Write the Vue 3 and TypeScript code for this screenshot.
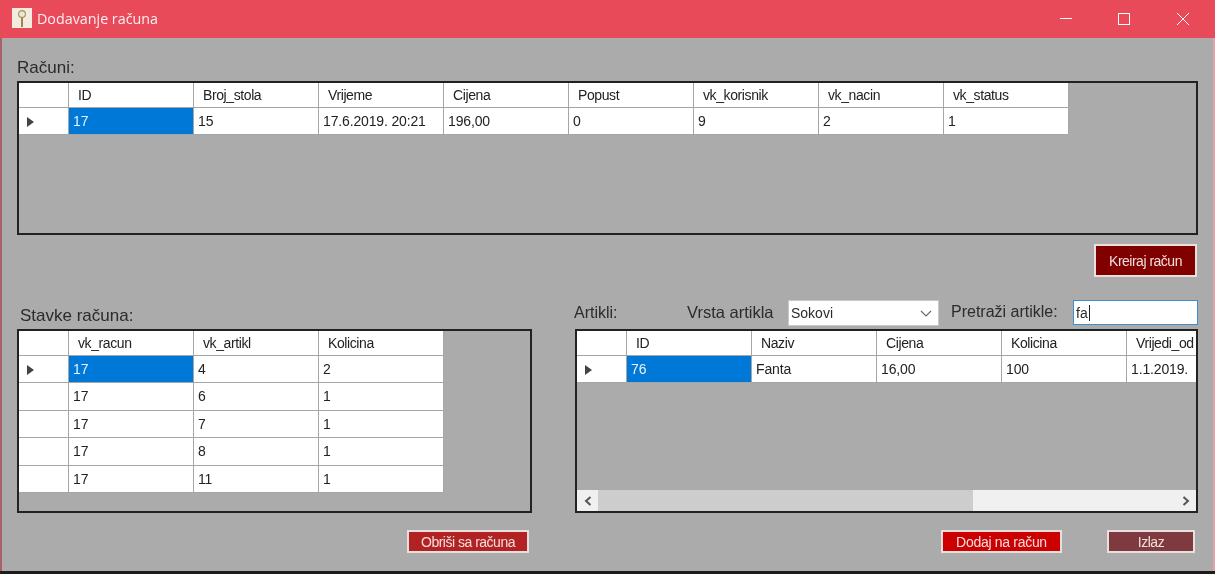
<template>
  <div class="window">
    <header class="titlebar">
      <div class="app-icon">
        <svg width="20" height="20" viewBox="0 0 20 20">
          <rect width="20" height="20" fill="#f1ecdd" />
          <path d="M10 9 L10 19" stroke="#8a6a35" stroke-width="1.6" />
          <circle cx="10" cy="6" r="3.4" fill="#efe6cf" stroke="#a58a5c" stroke-width="1.1" />
        </svg>
      </div>
      <span class="title">Dodavanje računa</span>
      <div class="window-btns">
        <svg width="12" height="12" viewBox="0 0 12 12"><path d="M0 5.5H12" stroke="#fff" stroke-width="1" /></svg>
        <svg width="12" height="12" viewBox="0 0 12 12"><rect x="0.5" y="0.5" width="11" height="11" fill="none" stroke="#fff" stroke-width="1" /></svg>
        <svg class="close" width="12" height="12" viewBox="0 0 12 12"><path d="M0 0L12 12M12 0L0 12" stroke="#fff" stroke-width="1" /></svg>
      </div>
    </header>

    <main class="content">
      <div class="top-label">Računi:</div>
      <div class="grid grid-top">
        <div class="row head">
          <div class="rowhead"></div>
          <div v-for="c in racuniCols" :key="c" class="cell">{{ c }}</div>
        </div>
        <div v-for="(r, i) in racuni" :key="i" class="row">
          <div class="rowhead"><span v-if="i === 0" class="arrow"></span></div>
          <div v-for="(v, j) in r" :key="j" class="cell" :class="{ selected: i === 0 && j === 0 }">{{ v }}</div>
        </div>
      </div>

      <div class="create-row">
        <button class="btn btn-create">Kreiraj račun</button>
      </div>

      <div class="lower">
        <section class="col">
          <div class="toolbar toolbar-left">Stavke računa:</div>
          <div class="grid grid-lower grid-stavke">
            <div class="row head">
              <div class="rowhead"></div>
              <div v-for="c in stavkeCols" :key="c" class="cell">{{ c }}</div>
            </div>
            <div v-for="(r, i) in stavke" :key="i" class="row">
              <div class="rowhead"><span v-if="i === 0" class="arrow"></span></div>
              <div v-for="(v, j) in r" :key="j" class="cell" :class="{ selected: i === 0 && j === 0 }">{{ v }}</div>
            </div>
          </div>
          <div class="actions">
            <button class="btn btn-remove">Obriši sa računa</button>
          </div>
        </section>

        <section class="col">
          <div class="toolbar">
            <span class="lbl-artikli">Artikli:</span>
            <span class="lbl-vrsta">Vrsta artikla</span>
            <div class="combo">
              <span>Sokovi</span>
              <svg width="12" height="7" viewBox="0 0 12 7"><path d="M1 1L6 6L11 1" fill="none" stroke="#666" stroke-width="1.1" /></svg>
            </div>
            <span class="lbl-search">Pretraži artikle:</span>
            <div class="search">fa<span class="caret"></span></div>
          </div>
          <div class="grid grid-lower grid-artikli">
            <div class="rows-clip">
              <div class="row head">
                <div class="rowhead"></div>
                <div v-for="c in artikliCols" :key="c" class="cell">{{ c }}</div>
              </div>
              <div v-for="(r, i) in artikli" :key="i" class="row">
                <div class="rowhead"><span v-if="i === 0" class="arrow"></span></div>
                <div v-for="(v, j) in r" :key="j" class="cell" :class="{ selected: i === 0 && j === 0 }">{{ v }}</div>
              </div>
            </div>
            <div class="scrollbar">
              <div class="sb-btn">
                <svg width="8" height="10" viewBox="0 0 8 10"><path d="M6.5 1L2 5L6.5 9" fill="none" stroke="#555" stroke-width="2" /></svg>
              </div>
              <div class="sb-track"><div class="sb-thumb"></div></div>
              <div class="sb-btn">
                <svg width="8" height="10" viewBox="0 0 8 10"><path d="M1.5 1L6 5L1.5 9" fill="none" stroke="#555" stroke-width="2" /></svg>
              </div>
            </div>
          </div>
          <div class="actions actions-right">
            <button class="btn btn-add">Dodaj na račun</button>
            <button class="btn btn-exit">Izlaz</button>
          </div>
        </section>
      </div>
    </main>
    <div class="bottom-edge"></div>
  </div>
</template>

<script setup lang="ts">
const racuniCols = ['ID', 'Broj_stola', 'Vrijeme', 'Cijena', 'Popust', 'vk_korisnik', 'vk_nacin', 'vk_status']
const racuni = [['17', '15', '17.6.2019. 20:21', '196,00', '0', '9', '2', '1']]

const stavkeCols = ['vk_racun', 'vk_artikl', 'Kolicina']
const stavke = [
  ['17', '4', '2'],
  ['17', '6', '1'],
  ['17', '7', '1'],
  ['17', '8', '1'],
  ['17', '11', '1']
]

const artikliCols = ['ID', 'Naziv', 'Cijena', 'Kolicina', 'Vrijedi_od']
const artikli = [['76', 'Fanta', '16,00', '100', '1.1.2019.']]
</script>

<style>
html, body {
  margin: 0;
  background: #1c1c1c;
}
</style>

<style scoped>
.window {
  width: 1215px;
  height: 574px;
  display: flex;
  flex-direction: column;
  overflow: hidden;
  background: #e84a5a;
  font-family: "Liberation Sans", Arial, sans-serif;
  color: #222;
  filter: blur(0.35px);
}

.titlebar {
  height: 38px;
  box-sizing: border-box;
  padding: 0 0 2px 12px;
  flex: none;
  display: flex;
  align-items: center;
  color: #fff;
}

.app-icon {
  width: 20px;
  height: 20px;
  margin-right: 5px;
}

.title {
  font-family: "Open Sans", sans-serif;
  font-size: 14.3px;
  color: #fdeef0;
}

.window-btns {
  margin-left: auto;
  display: flex;
  gap: 46px;
  padding: 2px 26px 0 0;
}

.close {
  margin-left: 1px;
}

.content {
  flex: 1;
  padding: 0 15px;
  background: #ababab;
  min-height: 0;
  border-left: 2px solid #a8636a;
  border-right: 2px solid #e8a0a8;
}

.top-label {
  height: 43px;
  line-height: 59px;
  font-size: 17px;
  color: #2b2b2b;
}

.grid {
  border: 2px solid #222;
  box-sizing: border-box;
  background: #ababab;
  overflow: hidden;
}

.grid-top {
  height: 154px;
}

.grid-lower {
  height: 184px;
}

.grid-artikli {
  display: flex;
  flex-direction: column;
}

.rows-clip {
  flex: 1;
  min-height: 0;
  overflow: hidden;
}

.row {
  display: flex;
  height: 27px;
  width: max-content;
  background: #fff;
}

.row.head {
  height: 25px;
}

.grid-stavke .row:not(.head) {
  height: 27.4px;
}

.rowhead {
  width: 50px;
  flex: none;
  box-sizing: border-box;
  border-right: 1px solid #a6a6a6;
  border-bottom: 1px solid #a6a6a6;
  display: flex;
  align-items: center;
  padding-left: 8px;
}

.arrow {
  width: 0;
  height: 0;
  margin-top: 1px;
  border-left: 7px solid #444;
  border-top: 5px solid transparent;
  border-bottom: 5px solid transparent;
}

.cell {
  width: 125px;
  flex: none;
  box-sizing: border-box;
  padding-left: 4px;
  border-right: 1px solid #a6a6a6;
  border-bottom: 1px solid #a6a6a6;
  font-size: 14px;
  letter-spacing: -0.15px;
  line-height: 26px;
  white-space: nowrap;
  overflow: hidden;
}

.head .cell {
  padding-left: 9px;
  letter-spacing: -0.4px;
  line-height: 24px;
}

.cell.selected {
  background: #0078d7;
  color: #e8f3fc;
}

.create-row {
  display: flex;
  justify-content: flex-end;
  padding: 9px 1px 0 0;
  height: 55px;
  box-sizing: border-box;
}

.btn {
  box-sizing: border-box;
  border: 2px solid #e9e0de;
  font-family: "Liberation Sans", Arial, sans-serif;
  font-size: 14px;
  letter-spacing: -0.5px;
  color: #f3dede;
  padding: 0;
  height: 23px;
  line-height: 16px;
}

.btn-create {
  width: 103px;
  height: 33px;
  background: #800000;
}

.lower {
  display: grid;
  grid-template-columns: 515px 623px;
  column-gap: 43px;
  margin-top: 10px;
}

.toolbar {
  height: 29px;
  display: flex;
  align-items: flex-start;
  font-size: 16px;
  color: #2b2b2b;
}

.toolbar-left {
  padding: 7px 0 0 3px;
  box-sizing: border-box;
  font-size: 17px;
  line-height: 18px;
}

.toolbar > span {
  line-height: 24px;
}

.toolbar > .lbl-artikli {
  margin-left: -1px;
  width: 113px;
  flex: none;
  line-height: 26px;
}

.lbl-vrsta {
  width: 101px;
  flex: none;
  font-size: 16.5px;
}

.combo {
  width: 151px;
  height: 26px;
  flex: none;
  box-sizing: border-box;
  background: #fff;
  border: 1px solid #c8c8c8;
  padding: 0 6px 0 2px;
  display: flex;
  align-items: center;
  justify-content: space-between;
  font-size: 14px;
}

.lbl-search {
  margin-left: 12px;
  width: 122px;
  flex: none;
}

.search {
  width: 125px;
  height: 25px;
  flex: none;
  box-sizing: border-box;
  background: #fff;
  border: 1px solid #3b8ed0;
  padding-left: 2px;
  font-size: 14px;
  line-height: 22px;
  display: flex;
  align-items: center;
}

.caret {
  width: 1px;
  height: 16px;
  background: #222;
  margin-left: 1px;
}

.scrollbar {
  height: 21px;
  flex: none;
  display: flex;
  background: #f0f0f0;
}

.sb-btn {
  width: 21px;
  flex: none;
  display: flex;
  align-items: center;
  justify-content: center;
}

.sb-track {
  flex: 1;
}

.sb-thumb {
  width: 375px;
  height: 100%;
  background: #cdcdcd;
}

.actions {
  display: flex;
  justify-content: flex-end;
  padding: 17px 3px 0 0;
}

.actions-right {
  padding-right: 3px;
  gap: 45px;
}

.btn-remove {
  width: 122px;
  background: #b22222;
}

.btn-add {
  width: 121px;
  background: #cc0000;
  letter-spacing: -0.3px;
}

.btn-exit {
  width: 88px;
  background: #7f3a3f;
}

.bottom-edge {
  height: 3px;
  flex: none;
  background: #1c1c1c;
}
</style>
